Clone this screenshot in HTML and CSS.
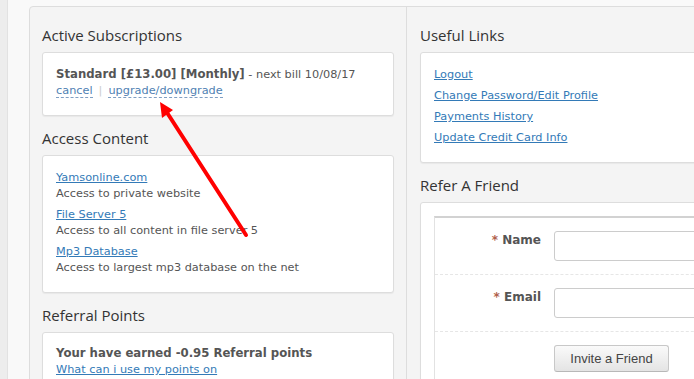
FILE: index.html
```html
<!DOCTYPE html>
<html lang="en">
<head>
  <meta charset="UTF-8">
  <meta name="viewport" content="width=device-width, initial-scale=1.0">
  <title>My Account</title>
  <link rel="stylesheet" href="styles.css">
</head>
<body>
  <div class="page">
    <aside class="rail"></aside>
    <main class="content">
      <div class="panel">
        <section class="col col-left">
          <h2>Active Subscriptions</h2>
          <div class="card">
            <p class="plan"><strong>Standard [£13.00] [Monthly]</strong> - next bill 10/08/17</p>
            <p class="plan-actions"><a href="#" class="dashed">cancel</a><span class="sep">|</span><a href="#" class="dashed">upgrade/downgrade</a></p>
          </div>

          <h2>Access Content</h2>
          <div class="card">
            <ul class="access-list">
              <li><a href="#">Yamsonline.com</a><span>Access to private website</span></li>
              <li><a href="#">File Server 5</a><span>Access to all content in file server 5</span></li>
              <li><a href="#">Mp3 Database</a><span>Access to largest mp3 database on the net</span></li>
            </ul>
          </div>

          <h2>Referral Points</h2>
          <div class="card card-points">
            <p class="plan"><strong>Your have earned -0.95 Referral points</strong></p>
            <p><a href="#">What can i use my points on</a></p>
          </div>
        </section>

        <section class="col col-right">
          <h2>Useful Links</h2>
          <div class="card">
            <ul class="link-list">
              <li><a href="#">Logout</a></li>
              <li><a href="#">Change Password/Edit Profile</a></li>
              <li><a href="#">Payments History</a></li>
              <li><a href="#">Update Credit Card Info</a></li>
            </ul>
          </div>

          <h2>Refer A Friend</h2>
          <div class="card">
            <form class="form-box">
              <div class="form-row">
                <label><span class="req">*</span> Name</label>
                <input type="text">
              </div>
              <div class="form-row">
                <label><span class="req">*</span> Email</label>
                <input type="text">
              </div>
              <div class="form-row">
                <span></span>
                <div><button type="button">Invite a Friend</button></div>
              </div>
            </form>
          </div>
        </section>
      </div>
    </main>
  </div>

  <svg class="arrow" width="694" height="379" viewBox="0 0 694 379">
    <line x1="246" y1="235" x2="166" y2="111" stroke="#ff0000" stroke-width="4" stroke-linecap="round"/>
    <polygon points="160,102 173,110 162,118" fill="#ff0000"/>
  </svg>
</body>
</html>
```

FILE: styles.css
```css
html, body {
  margin: 0;
  padding: 0;
  overflow: hidden;
}
body {
  font-family: "DejaVu Sans", Verdana, sans-serif;
  font-size: 11.3px;
  line-height: 16px;
  color: #555;
  background: #f9f9f9;
  position: relative;
}
p {
  margin: 0;
}
a {
  color: #337ab7;
}
.page {
  display: flex;
  min-height: 379px;
}
.rail {
  width: 7px;
  flex: none;
  background: #ededed;
  border-right: 1px solid #e2e2e2;
}
.content {
  padding: 6px 0 0 21px;
}
.panel {
  display: grid;
  grid-template-columns: 377px 1fr;
  width: 678px;
  box-sizing: border-box;
  background: #f4f4f4;
  border: 1px solid #ddd;
  border-radius: 4px;
}
.col {
  padding: 18px 12px 20px;
}
.col-left {
  border-right: 1px solid #ddd;
}
.col-right {
  padding: 18px 13px 20px 13px;
}
.col h2 {
  font-family: "Open Sans", sans-serif;
  font-weight: normal;
  font-size: 15px;
  line-height: 20px;
  color: #333;
  margin: 0 0 7px;
}
.card {
  background: #fff;
  border: 1px solid #ddd;
  border-radius: 3px;
  box-shadow: 0 1px 1px rgba(0, 0, 0, 0.05);
  padding: 14px 13px 16px;
  margin-bottom: 12px;
}
.card-points {
  padding-top: 13px;
}
.plan strong {
  font-weight: bold;
  font-size: 11.7px;
  line-height: 1;
}
.plan-actions a.dashed {
  color: #4f7fb3;
  text-decoration: none;
  border-bottom: 1px dashed #7f9fc4;
}
.sep {
  color: #ccc;
  margin: 0 6px;
}
.access-list,
.link-list {
  list-style: none;
  margin: 0;
  padding: 0;
}
.access-list li {
  margin-bottom: 5px;
}
.access-list li:last-child {
  margin-bottom: 0;
}
.access-list a,
.access-list span {
  display: block;
}
.link-list li {
  margin-bottom: 5px;
}
.link-list li:last-child {
  margin-bottom: 0;
}
.form-box {
  margin: -1px 0 0;
  border: 1px solid #e2e2e2;
  border-top: 2px solid #d2d2d2;
  border-right: none;
}
.form-row {
  display: grid;
  grid-template-columns: 106px 1fr;
  gap: 13px;
  padding: 13px 0;
  border-bottom: 1px dashed #e6e6e6;
}
.form-row:last-child {
  border-bottom: none;
}
.form-row label {
  text-align: right;
  font-weight: bold;
  font-size: 12px;
  color: #555;
  padding-top: 1px;
}
.req {
  color: #b0604a;
}
.form-row input {
  height: 30px;
  width: 200px;
  box-sizing: border-box;
  border: 1px solid #ccc;
  border-radius: 3px;
  padding: 4px 6px;
}
.form-row button {
  font-family: "Liberation Sans", Arial, sans-serif;
  font-size: 13px;
  color: #444;
  height: 27px;
  width: 115px;
  border: 1px solid #c8c8c8;
  border-bottom-color: #b8b8b8;
  border-radius: 3px;
  background: linear-gradient(#fafafa, #e4e4e4);
}
.arrow {
  position: absolute;
  top: 0;
  left: 0;
  pointer-events: none;
}
```
